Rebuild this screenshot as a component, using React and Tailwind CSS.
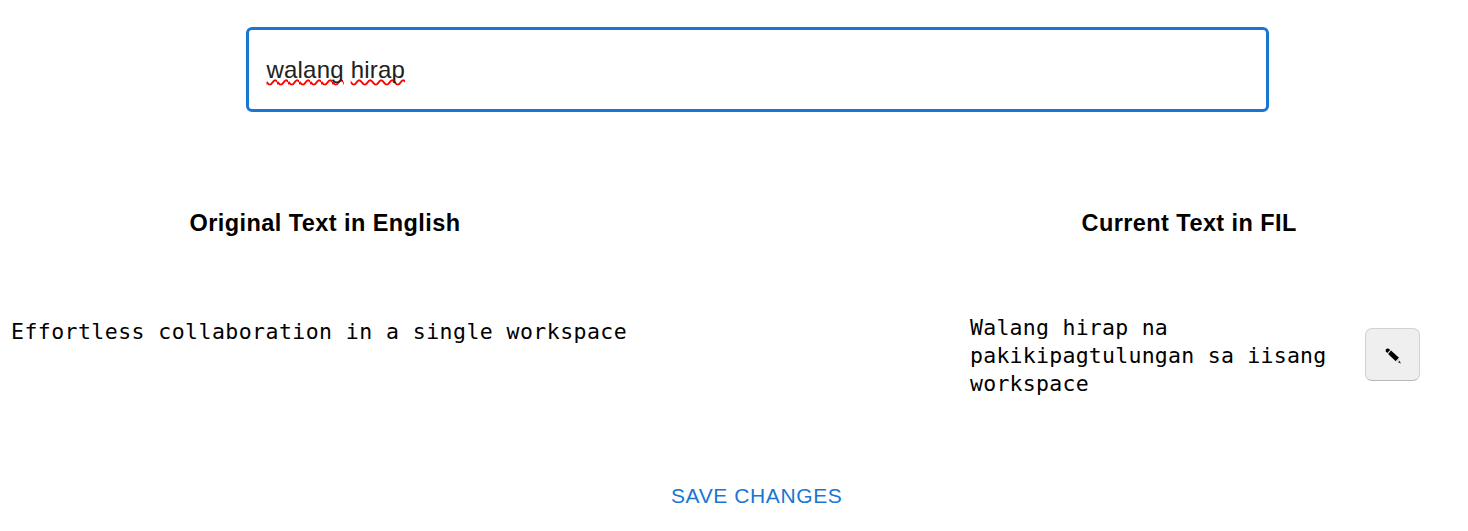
function PencilIcon() {
  return (
    <svg width="18" height="18" viewBox="0 0 18 18" aria-hidden="true" className="mt-0.5">
      <path d="M1.8 4.4 C1 2.2 3 0.9 5 1.9 L6.2 2.9 L3.4 6.1 Z" fill="#000" />
      <path d="M7 3.5 L15 10.7 L11.8 14.3 L4.1 7 Z" fill="#000" />
      <path d="M15 10.7 L16.5 16.3 L11.8 14.3 Z" fill="#dfd6cc" />
      <path d="M15.6 13.8 L16.9 16.5 L14.2 15.6 Z" fill="#222" />
    </svg>
  );
}

function Misspelled({ children }) {
  return (
    <span className="underline decoration-[#f00] decoration-wavy decoration-[1.5px] underline-offset-[1px] [text-decoration-skip-ink:none]">
      {children}
    </span>
  );
}

export default function App() {
  return (
    <main className="flex h-[531px] w-[1468px] flex-col bg-white font-['Liberation_Sans',Arial,sans-serif] text-black">
      <div className="mt-[27px] ml-[246px] flex h-[85px] w-[1023px] items-center rounded-[6px] border-[3px] border-[#1976d2] pl-[17.5px]">
        <div className="text-[24px] leading-[34px] tracking-[0.2px] text-[#212121]">
          <Misspelled>walang</Misspelled> <Misspelled>hirap</Misspelled>
        </div>
      </div>

      <div className="mt-[94px] flex h-[34px] items-center text-[23.5px] leading-[34px] font-bold whitespace-nowrap">
        <h2 className="ml-[189.5px] w-[892px] tracking-[0.43px]">Original Text in English</h2>
        <h2 className="tracking-[0.43px]">Current Text in FIL</h2>
      </div>

      <div className="mt-[74px] flex h-[84px] items-start font-['DejaVu_Sans_Mono',monospace] text-[21.5px] leading-[28px]">
        <p className="mt-1 ml-[11px] w-[959px] tracking-[0.45px] whitespace-nowrap">
          Effortless collaboration in a single workspace
        </p>
        <p className="w-[395px] tracking-[0.26px] whitespace-nowrap">
          Walang hirap na
          <br />
          pakikipagtulungan sa iisang
          <br />
          workspace
        </p>
        <button
          aria-label="Edit"
          className="mt-[14px] flex h-[53px] w-[55px] items-center justify-center rounded-[7px] border border-[#d2d2d2] border-b-[#b8b8b8] bg-[#efefef]"
        >
          <PencilIcon />
        </button>
      </div>

      <button className="mt-[80px] ml-[671px] w-[172px] text-left text-[21px] leading-[36px] tracking-[0.6px] whitespace-nowrap text-[#1976d2]">
        SAVE CHANGES
      </button>
    </main>
  );
}
